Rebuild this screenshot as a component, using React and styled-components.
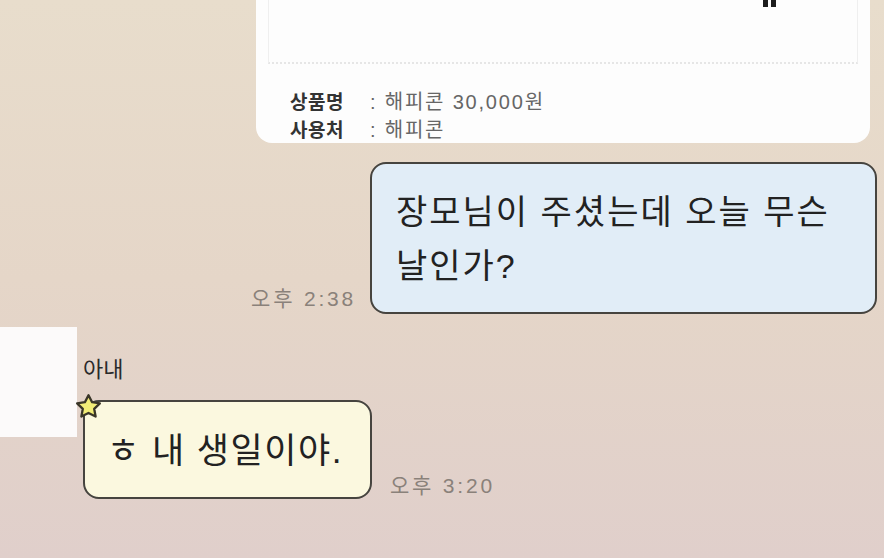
import {createGlobalStyle, styled} from 'styled-components'

const GlobalStyle = createGlobalStyle`
  html, body {
    margin: 0;
    padding: 0;
  }
  body {
    font-family: "Liberation Sans", "Noto Sans CJK KR", sans-serif;
  }
`

const Screen = styled.div`
  width: 884px;
  height: 558px;
  overflow: hidden;
  background: linear-gradient(180deg, #e8ddcc 0%, #e5d6c8 50%, #e0cfcb 100%);
  display: flex;
  flex-direction: column;
`

const GiftCard = styled.div`
  margin-left: 256px;
  width: 614px;
  height: 143px;
  background: #fdfdfd;
  border-radius: 0 0 16px 16px;
  box-sizing: border-box;
  padding: 0 12px;
  display: flex;
  flex-direction: column;
`

const Picture = styled.div`
  position: relative;
  height: 62px;
  border: 1px solid #efefef;
  border-top: 0;
  border-bottom: 2px dotted #e6e6e6;
`

const Mark = styled.div`
  position: absolute;
  left: 494px;
  top: 0;
  display: flex;
  gap: 3px;

  span {
    width: 5px;
    height: 7px;
    background: #1c1c1c;
  }
`

const InfoList = styled.div`
  padding: 26px 0 0 22px;
  display: grid;
  grid-template-columns: 80px auto;
  row-gap: 3px;
  font-size: 19px;
  line-height: 25px;
`

const Label = styled.span`
  font-weight: 700;
  color: #333;
  letter-spacing: 0.5px;
`

const Value = styled.span`
  color: #666;
  font-size: 20px;
  letter-spacing: 1.8px;
`

const Row = styled.div`
  display: flex;
  align-items: flex-end;
  gap: ${p => p.$gap || 14}px;
`

const MineRow = styled(Row)`
  margin-top: 19px;
  justify-content: flex-end;
  padding-right: 7px;
`

const Time = styled.span`
  font-size: 21px;
  color: #8a817a;
  letter-spacing: 2.8px;
  padding-bottom: ${p => p.$pb || 0}px;
`

const Bubble = styled.div`
  background: ${p => p.$bg};
  border: 2px solid #46443f;
  border-radius: 16px;
  box-sizing: border-box;
  color: #222;
  font-size: ${p => p.$size}px;
  letter-spacing: ${p => p.$ls}px;
`

const MineBubble = styled(Bubble)`
  width: 507px;
  height: 152px;
  padding: 21px 10px 0 24px;
  line-height: 54px;
`

const TheirRow = styled.div`
  margin-top: 13px;
  display: flex;
  gap: 6px;
`

const Avatar = styled.div`
  width: 77px;
  height: 110px;
  background: #fcfafa;
`

const TheirBody = styled.div`
  display: flex;
  flex-direction: column;
  padding-top: 29px;
`

const Name = styled.div`
  font-size: 22px;
  color: #2a2a2a;
  line-height: 28px;
`

const TheirBubbleWrap = styled.div`
  position: relative;
  margin-top: 16px;
`

const TheirBubble = styled(Bubble)`
  width: 289px;
  height: 99px;
  display: flex;
  align-items: center;
  padding: 0 0 4px 22px;
`

const Star = styled.svg`
  position: absolute;
  left: -10px;
  top: -8px;
`

export default function App() {
  return (
    <>
      <GlobalStyle />
      <Screen>
        <GiftCard>
          <Picture>
            <Mark><span /><span /></Mark>
          </Picture>
          <InfoList>
            <Label>상품명</Label>
            <Value>: 해피콘 30,000원</Value>
            <Label>사용처</Label>
            <Value>: 해피콘</Value>
          </InfoList>
        </GiftCard>

        <MineRow>
          <Time $pb={2}>오후 2:38</Time>
          <MineBubble $bg="#e1edf7" $size={34} $ls={2}>
            장모님이 주셨는데 오늘 무슨<br />날인가?
          </MineBubble>
        </MineRow>

        <TheirRow>
          <Avatar />
          <TheirBody>
            <Name>아내</Name>
            <Row $gap={18}>
              <TheirBubbleWrap>
                <TheirBubble $bg="#fbf8df" $size={35} $ls={1.5}>
                  ㅎ 내 생일이야.
                </TheirBubble>
                <Star width="31" height="31" viewBox="0 0 24 24">
                  <path
                    d="M12 2.5l2.8 5.4 6 .9-4.4 4.2 1.1 6L12 16.2l-5.5 2.8 1.1-6-4.4-4.2 6-.9z"
                    fill="#f2ed78"
                    stroke="#3a3628"
                    strokeWidth="1.8"
                    strokeLinejoin="round"
                  />
                </Star>
              </TheirBubbleWrap>
              <Time $pb={0}>오후 3:20</Time>
            </Row>
          </TheirBody>
        </TheirRow>
      </Screen>
    </>
  )
}
